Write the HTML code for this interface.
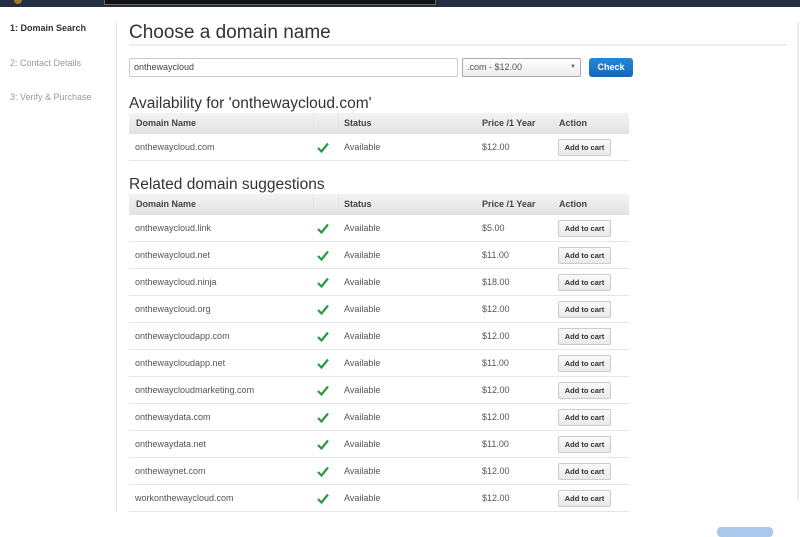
<!DOCTYPE html>
<html><head><meta charset="utf-8"><style>
*{margin:0;padding:0;box-sizing:border-box}
body{width:800px;height:533px;overflow:hidden;background:#fff;font-family:"Liberation Sans",Arial,sans-serif;position:relative;color:#333}
.a{position:absolute}
.top{left:0;top:0;width:800px;height:7px;background:#232f3e}
.dk{left:104px;top:0;width:332px;height:5px;background:#111;border:1px solid #666;border-top:0}
.side{font-size:9px;color:#999;left:10px}
.th{left:129px;width:500px;height:21px;background:linear-gradient(#f3f3f3,#e2e2e2);font-size:9px;font-weight:bold;color:#444}
.th span,.tr span{position:absolute;top:0;line-height:21px}
.tr{left:129px;width:500px;height:27px;border-bottom:1px solid #e6e6e6;font-size:9px;color:#555}
.tr span{line-height:27px}
.btn{position:absolute;left:429px;top:5px;width:53px;height:17px;border:1px solid #ccc;border-radius:2px;background:linear-gradient(#fafafa,#e9e9e9);font-size:7.5px;font-weight:bold;color:#333;text-align:center;line-height:15px}
.ck{position:absolute;left:188px;top:8px}
h2{position:absolute;font-weight:normal;font-size:15.5px;color:#333;left:129px}
</style></head><body>
<div class="a top"></div><div class="a dk"></div>
<div class="a" style="left:14px;top:0;width:8px;height:4px;background:#a27a2e;border-radius:0 0 4px 4px"></div>
<div class="a side" style="top:23px;color:#333;font-weight:bold">1: Domain Search</div>
<div class="a side" style="top:58px">2: Contact Details</div>
<div class="a side" style="top:92px">3: Verify &amp; Purchase</div>
<div class="a" style="left:116px;top:22px;width:1px;height:490px;background:#e2e2e2"></div>
<div class="a" style="left:797px;top:22px;width:2px;height:478px;background:#ececec"></div>
<div class="a" style="left:129px;top:22px;font-size:19px;color:#333">Choose a domain name</div>
<div class="a" style="left:129px;top:44px;width:658px;height:2px;background:#eee"></div>
<div class="a" style="left:129px;top:58px;width:329px;height:19px;border:1px solid #ccc;border-radius:2px;font-size:9px;color:#444;padding-left:4px;line-height:17px">onthewaycloud</div>
<div class="a" style="left:462px;top:58px;width:119px;height:19px;border:1px solid #aaa;border-radius:2px;background:linear-gradient(#fff,#ececec);font-size:9px;color:#555;padding-left:4px;line-height:17px">.com - $12.00<span style="position:absolute;right:4px;top:0;font-size:6px;color:#666">▼</span></div>
<div class="a" style="left:589px;top:58px;width:44px;height:19px;border-radius:3px;background:linear-gradient(#2a86d6,#1765b8);color:#fff;font-size:9px;font-weight:bold;text-align:center;line-height:19px">Check</div>
<h2 style="top:95px">Availability for 'onthewaycloud.com'</h2>
<h2 style="top:176px">Related domain suggestions</h2>
<div id="t"></div>
<div class="a" style="left:717px;top:527px;width:56px;height:10px;border-radius:4px;background:#a9c8ec"></div>
<script>
function th(y){return '<div class="a th" style="top:'+y+'px"><span style="left:7px">Domain Name</span><span style="left:184px;top:0;height:21px;width:1px;background:#e4e4e4"></span><span style="left:209px;height:21px;width:1px;background:#e4e4e4"></span><span style="left:215px">Status</span><span style="left:353px">Price /1 Year</span><span style="left:430px">Action</span></div>'}
function tr(y,d,p){return '<div class="a tr" style="top:'+y+'px"><span style="left:6px">'+d+'</span><svg class="ck" width="12" height="11" viewBox="0 0 12 11"><path d="M1 6 L4.5 9.5 L11 1.5" stroke="#2a9a3c" stroke-width="2.2" fill="none"/></svg><span style="left:215px">Available</span><span style="left:353px">'+p+'</span><div class="btn">Add to cart</div></div>'}
var h=th(113)+tr(134,'onthewaycloud.com','$12.00')+th(194);
var r=[['onthewaycloud.link','$5.00'],['onthewaycloud.net','$11.00'],['onthewaycloud.ninja','$18.00'],['onthewaycloud.org','$12.00'],['onthewaycloudapp.com','$12.00'],['onthewaycloudapp.net','$11.00'],['onthewaycloudmarketing.com','$12.00'],['onthewaydata.com','$12.00'],['onthewaydata.net','$11.00'],['onthewaynet.com','$12.00'],['workonthewaycloud.com','$12.00']];
r.forEach(function(x,i){h+=tr(215+27*i,x[0],x[1])});
document.getElementById('t').innerHTML=h;
</script>
</body></html>
